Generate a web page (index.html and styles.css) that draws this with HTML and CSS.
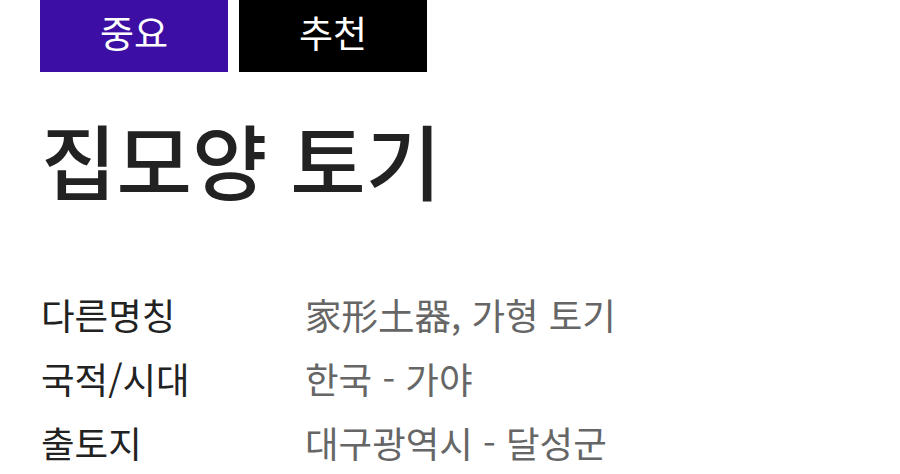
FILE: index.html
```html
<!DOCTYPE html>
<html lang="ko">
<head>
<meta charset="utf-8">
<link rel="stylesheet" href="styles.css">
</head>
<body>
<div class="page">
  <div class="tags">
    <span class="tag tag-important">중요</span>
    <span class="tag tag-recommend">추천</span>
  </div>
  <h1 class="title">집모양 토기</h1>
  <dl class="info">
    <div class="row"><dt>다른명칭</dt><dd>家形土器, 가형 토기</dd></div>
    <div class="row"><dt>국적/시대</dt><dd>한국 - 가야</dd></div>
    <div class="row"><dt>출토지</dt><dd>대구광역시 - 달성군</dd></div>
  </dl>
</div>
</body>
</html>
```
FILE: styles.css
```css
html, body {
  margin: 0;
  padding: 0;
  background: #ffffff;
}
body {
  font-family: "Noto Sans CJK KR", "Noto Sans", sans-serif;
  color: #222222;
}
.page {
  padding-left: 40px;
}
.tags {
  display: flex;
  gap: 11px;
}
.tag {
  width: 188px;
  height: 72px;
  display: flex;
  align-items: center;
  justify-content: center;
  color: #ffffff;
  font-size: 37px;
  line-height: 1;
  padding-bottom: 8px;
  box-sizing: border-box;
}
.tag-important {
  background: #3d0ea3;
}
.tag-recommend {
  background: #000000;
}
.title {
  margin: 38px 0 0 1px;
  font-size: 82px;
  font-weight: 500;
  line-height: 1.2;
  color: #222222;
}
.info {
  margin: 74px 0 0 1px;
}
.row {
  display: flex;
  height: 64px;
  align-items: center;
}
.info dt {
  width: 264px;
  font-size: 36.5px;
  color: #222222;
}
.info dd {
  margin: 0;
  font-size: 36.5px;
  color: #666666;
}
```
